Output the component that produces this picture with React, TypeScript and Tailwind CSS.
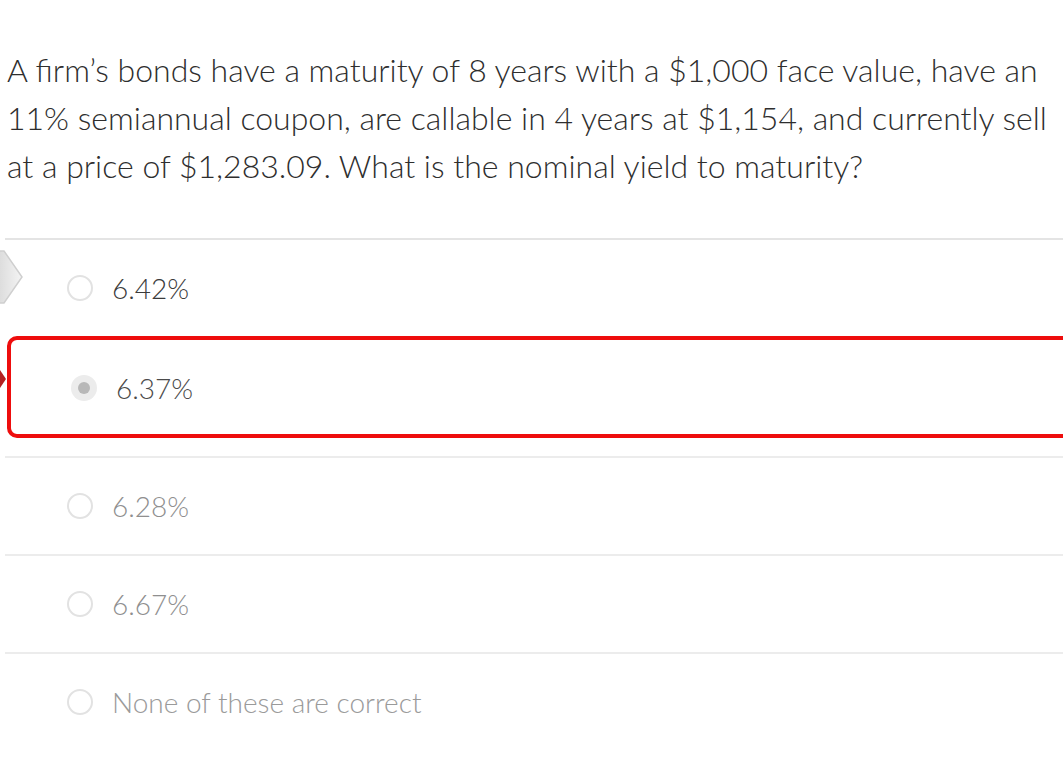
import React from 'react';

const options = [
  { label: '6.42%', tone: 'text-[#3b3b3b]' },
  { label: '6.37%', tone: 'text-[#4a4a4a]', selected: true },
  { label: '6.28%', tone: 'text-[#8f8f8f]' },
  { label: '6.67%', tone: 'text-[#8f8f8f]' },
  { label: 'None of these are correct', tone: 'text-[#9a9a9a]' },
];

const Radio = ({ selected }: { selected?: boolean }) =>
  selected ? (
    <span className="w-[26px] h-[26px] rounded-full bg-[#ececec] flex items-center justify-center">
      <span className="w-[12px] h-[12px] rounded-full bg-[#b8b8b8]" />
    </span>
  ) : (
    <span className="w-[26px] h-[26px] rounded-full border-2 border-[#e2e2e2] bg-white" />
  );

export default function App() {
  return (
    <div
      className="relative w-[1063px] h-[761px] overflow-hidden bg-white"
      style={{ fontFamily: 'Lato, "Open Sans", sans-serif' }}
    >
      <div className="pt-[46px] pl-[7px] text-[32px] leading-[48px] font-light text-[#2e2e2e] whitespace-nowrap">
        <div>A firm’s bonds have a maturity of 8 years with a $1,000 face value, have an</div>
        <div>11% semiannual coupon, are callable in 4 years at $1,154, and currently sell</div>
        <div>at a price of $1,283.09. What is the nominal yield to maturity?</div>
      </div>

      <div className="mt-[48px] ml-[5px] w-[1100px] border-t-2 border-[#e4e4e4]">
        {/* first answer */}
        <div className="h-[96px] flex items-center gap-[19px] pl-[62px]">
          <Radio />
          <span className={`text-[28px] font-light ${options[0].tone}`}>{options[0].label}</span>
        </div>

        {/* selected answer, outlined */}
        <div className="ml-[2px] h-[102px] rounded-[10px] border-4 border-[#ee0d0d] flex items-center gap-[19px] pl-[60px] pt-[2px]">
          <Radio selected />
          <span className={`text-[28px] font-light ${options[1].tone}`}>{options[1].label}</span>
        </div>

        <div className="h-[18px]" />

        {options.slice(2).map((o) => (
          <div
            key={o.label}
            className="h-[98px] border-t-2 border-[#ececec] flex items-center gap-[19px] pl-[62px]"
          >
            <Radio />
            <span className={`text-[28px] font-light ${o.tone}`}>{o.label}</span>
          </div>
        ))}
      </div>

      {/* grey pointer tab */}
      <svg className="absolute left-0 top-[249px]" width="24" height="56" viewBox="0 0 24 56">
        <defs>
          <linearGradient id="tab" x1="0" y1="0" x2="1" y2="0">
            <stop offset="0" stopColor="#d9d9d9" />
            <stop offset="1" stopColor="#f4f4f4" />
          </linearGradient>
        </defs>
        <path d="M-4 2 H4 L22 28 L4 54 H-4 Z" fill="url(#tab)" stroke="#cfcfcf" strokeWidth="1.5" />
      </svg>

      {/* red pointer */}
      <svg className="absolute left-0 top-[368px]" width="8" height="22" viewBox="0 0 8 22">
        <path d="M0 2 L6 11 L0 20 Z" fill="#b32020" />
      </svg>
    </div>
  );
}
